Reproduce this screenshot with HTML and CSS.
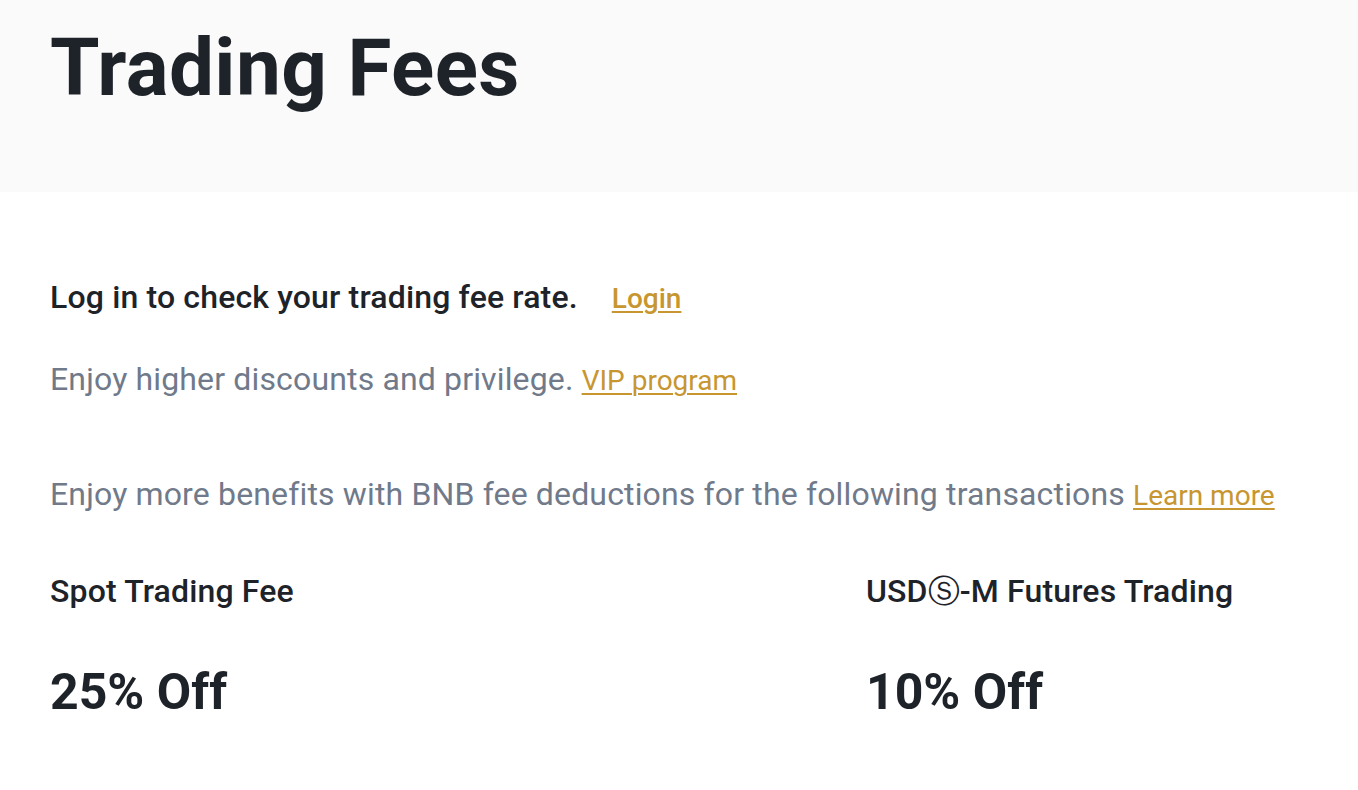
FILE: index.html
```html
<!DOCTYPE html>
<html lang="en">
<head>
<meta charset="utf-8">
<title>Trading Fees</title>
<link rel="stylesheet" href="styles.css">
</head>
<body>
<header class="hero">
  <h1 class="hero-title">Trading Fees</h1>
</header>
<main class="content">
  <div class="login-row">
    <span class="login-text">Log in to check your trading fee rate.</span>
    <a class="link" href="#">Login</a>
  </div>
  <p class="note vip">Enjoy higher discounts and privilege. <a class="link" href="#">VIP program</a></p>
  <p class="note bnb">Enjoy more benefits with BNB fee deductions for the following transactions <a class="link" href="#">Learn more</a></p>
  <div class="discounts">
    <div class="discount">
      <div class="discount-label">Spot Trading Fee</div>
      <div class="discount-value">25% Off</div>
    </div>
    <div class="discount">
      <div class="discount-label">USDⓈ-M Futures Trading</div>
      <div class="discount-value">10% Off</div>
    </div>
  </div>
</main>
</body>
</html>
```

FILE: styles.css
```css
* { box-sizing: border-box; }
html, body { margin: 0; padding: 0; }
body {
  font-family: Roboto, "Noto Sans", sans-serif;
  color: #1e2329;
  background: #ffffff;
}
.hero {
  background: #fafafa;
  height: 192px;
  padding: 20px 50px 0;
}
.hero-title {
  margin: 0;
  font-size: 80px;
  line-height: 96px;
  font-weight: 700;
  letter-spacing: 0.4px;
  color: #1e2329;
}
.content {
  padding: 0 50px;
}
.login-row {
  margin-top: 81px;
  display: flex;
  align-items: baseline;
  gap: 34px;
  font-size: 32px;
  line-height: 48px;
  letter-spacing: 0.15px;
}
.login-text {
  font-weight: 500;
}
.link {
  font-size: 28px;
  line-height: 1;
  letter-spacing: 0;
  color: #c79630;
  text-decoration: underline;
  text-decoration-thickness: 2px;
  text-underline-offset: 3px;
}
.login-row .link { font-weight: 500; }
.note {
  margin: 0;
  font-size: 32px;
  line-height: 48px;
  letter-spacing: 0.15px;
  color: #707a8a;
}
.vip { margin-top: 34px; }
.bnb { margin-top: 67px; }
.discounts {
  display: grid;
  grid-template-columns: 816px 1fr;
  margin-top: 49px;
}
.discount-label {
  font-size: 32px;
  line-height: 48px;
  font-weight: 500;
  letter-spacing: 0.15px;
}
.discount-value {
  margin-top: 49px;
  font-size: 50px;
  line-height: 56px;
  font-weight: 700;
}
```
